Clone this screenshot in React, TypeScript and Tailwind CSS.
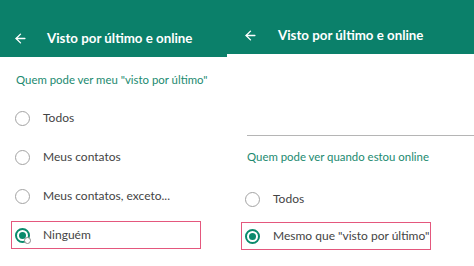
import { ArrowLeft } from 'lucide-react'

const font = { fontFamily: 'Lato, "Noto Sans", sans-serif' }

const Radio = ({ checked, cursor }: { checked?: boolean; cursor?: boolean }) => (
  <div className="relative w-[15px] h-[15px] shrink-0">
    {checked ? (
      <div className="w-[15px] h-[15px] rounded-full border-2 border-[#0b8a6c] flex items-center justify-center">
        <div className="w-[7px] h-[7px] rounded-full bg-[#0b8a6c]" />
      </div>
    ) : (
      <div className="w-[15px] h-[15px] rounded-full border-[1.5px] border-[#a3a3a3]" />
    )}
    {cursor && (
      <div className="absolute left-[9px] top-[9px] w-[7px] h-[7px] rounded-full border border-[#8a8a8a] bg-white" />
    )}
  </div>
)

const Option = ({ label, checked, boxed, cursor }: { label: string; checked?: boolean; boxed?: boolean; cursor?: boolean }) => (
  <div
    className={`h-[28px] flex items-center border-[1.5px] ${boxed ? 'border-[#e4577d]' : 'border-transparent'}`}
  >
    <div className="w-[21px] flex justify-center">
      <Radio checked={checked} cursor={cursor} />
    </div>
    <span className="ml-[10px] text-[12px] text-[#444] whitespace-nowrap">{label}</span>
  </div>
)

export default function App() {
  return (
    <div className="w-[474px] h-[266px] bg-white flex overflow-hidden" style={font}>
      {/* left screen */}
      <div className="w-[227px] shrink-0 flex flex-col">
        <div className="h-[57px] bg-[#0b806a] flex items-start pt-[28px] text-white">
          <ArrowLeft size={15} strokeWidth={2.2} className="ml-[13px] mt-[3px]" />
          <span className="ml-[19px] text-[13.3px] font-bold leading-[20px] whitespace-nowrap">Visto por último e online</span>
        </div>
        <div className="mt-[13px] pl-[16px] text-[11.4px] leading-[20px] text-[#1b8a70] whitespace-nowrap">
          Quem pode ver meu "visto por último"
        </div>
        <div className="mt-[14px] mx-[11px] w-[190px] flex flex-col gap-[11px]">
          <Option label="Todos" />
          <Option label="Meus contatos" />
          <Option label="Meus contatos, exceto..." />
          <Option label="Ninguém" checked boxed cursor />
        </div>
      </div>

      {/* right screen */}
      <div className="flex-1 flex flex-col">
        <div className="h-[54px] bg-[#0b806a] flex items-start pt-[25px] text-white">
          <ArrowLeft size={15} strokeWidth={2.2} className="ml-[16px] mt-[3px]" />
          <span className="ml-[20px] text-[13.3px] font-bold leading-[20px] whitespace-nowrap">Visto por último e online</span>
        </div>
        <div className="mt-[81px] ml-[20px] h-px bg-[#b5b5b5]" />
        <div className="mt-[11px] pl-[20px] text-[11.4px] leading-[20px] text-[#1b8a70] whitespace-nowrap">
          Quem pode ver quando estou online
        </div>
        <div className="mt-[18px] mx-[14px] w-[190px] flex flex-col gap-[9px]">
          <Option label="Todos" />
          <Option label={'Mesmo que "visto por último"'} checked boxed />
        </div>
      </div>
    </div>
  )
}
